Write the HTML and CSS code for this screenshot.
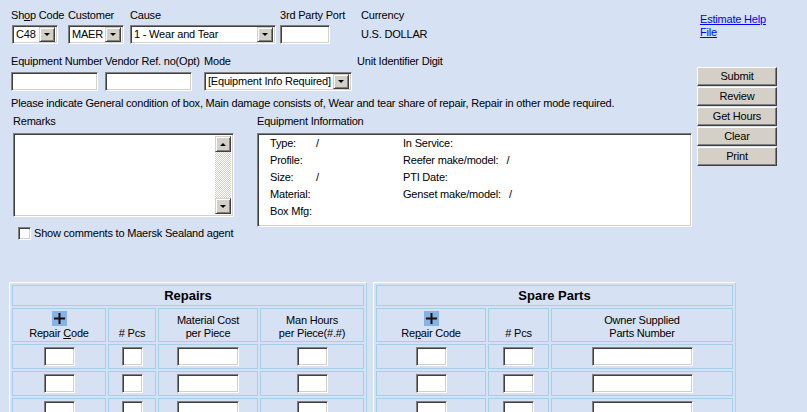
FILE: index.html
```html
<!DOCTYPE html>
<html>
<head>
<meta charset="utf-8">
<link rel="stylesheet" href="styles.css">
</head>
<body>
<div class="page">
  <div class="top">
    <div class="main">
      <div class="row1">
        <div class="lbl">Sh<u>o</u>p Code</div>
        <div class="lbl">Customer</div>
        <div class="lbl">Cause</div>
        <div class="lbl">3rd Party Port</div>
        <div class="lbl">Currency</div>
        <div class="sel w46 ml1"><span class="sel-text">C48</span><span class="dd"><i></i></span></div>
        <div class="sel w56"><span class="sel-text">MAER</span><span class="dd"><i></i></span></div>
        <div class="sel w146"><span class="sel-text">1 - Wear and Tear</span><span class="dd"><i></i></span></div>
        <div class="box w50"></div>
        <div class="value">U.S. DOLLAR</div>
      </div>
      <div class="row2">
        <div class="lbl">Equipment Number</div>
        <div class="lbl">Vendor Ref. no(Opt)</div>
        <div class="lbl">Mode</div>
        <div class="lbl">Unit Identifier Digit</div>
        <div class="box w87"></div>
        <div class="box w87"></div>
        <div class="sel w148"><span class="sel-text">[Equipment Info Required]</span><span class="dd"><i></i></span></div>
        <div></div>
      </div>
      <div class="note">Please indicate General condition of box, Main damage consists of, Wear and tear share of repair, Repair in other mode required.</div>
      <div class="info-row">
        <div class="remarks">
          <div class="lbl">Remarks</div>
          <div class="box textarea">
            <div class="ta-body"></div>
            <div class="scroll">
              <span class="sb-btn"><i class="up"></i></span>
              <span class="sb-track"></span>
              <span class="sb-btn"><i></i></span>
            </div>
          </div>
          <label class="check"><span class="cb"></span>Show comments to Maersk Sealand agent</label>
        </div>
        <div class="equip">
          <div class="lbl">Equipment Information</div>
          <div class="box eqbox">
            <div class="eq-grid">
              <div><span class="eq-l">Type:</span>/</div><div>In Service:</div>
              <div><span class="eq-l">Profile:</span></div><div>Reefer make/model:<span class="slash">/</span></div>
              <div><span class="eq-l">Size:</span>/</div><div>PTI Date:</div>
              <div><span class="eq-l">Material:</span></div><div>Genset make/model:<span class="slash">/</span></div>
              <div><span class="eq-l">Box Mfg:</span></div><div></div>
            </div>
          </div>
        </div>
      </div>
    </div>
    <div class="side">
      <a class="help" href="#">Estimate Help File</a>
      <div class="buttons">
        <button class="btn">Submit</button>
        <button class="btn">Review</button>
        <button class="btn">Get Hours</button>
        <button class="btn">Clear</button>
        <button class="btn">Print</button>
      </div>
    </div>
  </div>

  <div class="tables">
    <table class="grid repairs">
      <colgroup><col class="c94"><col class="c48"><col class="c100"><col class="c106"></colgroup>
      <tr><th colspan="4" class="title">Repairs</th></tr>
      <tr class="heads">
        <td><svg class="plus" width="15" height="15" viewBox="0 0 15 15"><rect width="15" height="15" fill="#86b3e3"/><path d="M7.5 2v11M2 7.5h11" stroke="#1a0d0d" stroke-width="2"/></svg><br>Repair <u>C</u>ode</td>
        <td># Pcs</td>
        <td>Material Cost<br>per Piece</td>
        <td>Man Hours<br>per Piece(#.#)</td>
      </tr>
      <tr class="data"><td><span class="box in31"></span></td><td><span class="box in21"></span></td><td><span class="box in62"></span></td><td><span class="box in31"></span></td></tr>
      <tr class="data"><td><span class="box in31"></span></td><td><span class="box in21"></span></td><td><span class="box in62"></span></td><td><span class="box in31"></span></td></tr>
      <tr class="data"><td><span class="box in31"></span></td><td><span class="box in21"></span></td><td><span class="box in62"></span></td><td><span class="box in31"></span></td></tr>
    </table>
    <table class="grid spare">
      <colgroup><col class="c110"><col class="c61"><col class="c184"></colgroup>
      <tr><th colspan="3" class="title">Spare Parts</th></tr>
      <tr class="heads">
        <td><svg class="plus" width="15" height="15" viewBox="0 0 15 15"><rect width="15" height="15" fill="#86b3e3"/><path d="M7.5 2v11M2 7.5h11" stroke="#1a0d0d" stroke-width="2"/></svg><br>Re<u>p</u>air Code</td>
        <td># Pcs</td>
        <td>Owner Supplied<br>Parts Number</td>
      </tr>
      <tr class="data"><td><span class="box in31"></span></td><td><span class="box in31"></span></td><td><span class="box in101"></span></td></tr>
      <tr class="data"><td><span class="box in31"></span></td><td><span class="box in31"></span></td><td><span class="box in101"></span></td></tr>
      <tr class="data"><td><span class="box in31"></span></td><td><span class="box in31"></span></td><td><span class="box in101"></span></td></tr>
    </table>
  </div>
</div>
</body>
</html>
```
FILE: styles.css
```css
html, body {
  margin: 0;
  padding: 0;
  overflow: hidden;
  height: 100%;
}
body {
  background: #d6e1f3;
  font-family: "Liberation Sans", Arial, sans-serif;
  font-size: 11px;
  line-height: 13px;
  letter-spacing: -0.2px;
  color: #000;
}
.page {
  padding: 9px 0 0 11px;
}
.top {
  display: flex;
}
.main {
  width: 681px;
  flex-shrink: 0;
}
.lbl {
  white-space: nowrap;
}
.row1 {
  display: grid;
  grid-template-columns: 57px 62px 150px 81px 1fr;
  grid-template-rows: 13px 19px;
  row-gap: 3px;
}
.row2 {
  margin-top: 11px;
  display: grid;
  grid-template-columns: 94px 99px 153px 1fr;
  grid-template-rows: 13px 19px;
  row-gap: 4px;
}
.value {
  align-self: center;
}
.box {
  box-sizing: border-box;
  display: block;
  height: 19px;
  background: #fff;
  border: 1px solid;
  border-color: #808080 #fff #fff #808080;
  box-shadow: inset 1px 1px 0 #404040, inset -1px -1px 0 #d4d0c8;
}
.sel {
  box-sizing: border-box;
  height: 19px;
  display: flex;
  align-items: center;
  background: #fff;
  border: 1px solid;
  border-color: #808080 #fff #fff #808080;
  box-shadow: inset 1px 1px 0 #404040, inset -1px -1px 0 #d4d0c8;
  padding: 2px 2px 2px 3px;
}
.sel-text {
  flex: 1;
  white-space: nowrap;
  overflow: hidden;
  line-height: 15px;
}
.dd, .sb-btn {
  flex-shrink: 0;
  box-sizing: border-box;
  width: 16px;
  height: 15px;
  background: #d4d0c8;
  border: 1px solid;
  border-color: #d4d0c8 #404040 #404040 #d4d0c8;
  box-shadow: inset 1px 1px 0 #fff, inset -1px -1px 0 #808080;
  display: flex;
  align-items: center;
  justify-content: center;
}
.dd i, .sb-btn i {
  width: 0;
  height: 0;
  border-left: 3px solid transparent;
  border-right: 3px solid transparent;
  border-top: 3px solid #000;
}
.sb-btn i.up {
  border-top: 0;
  border-bottom: 3px solid #000;
}
.ml1 { margin-left: 1px; }
.w46 { width: 46px; }
.w56 { width: 56px; }
.w146 { width: 146px; }
.w148 { width: 148px; }
.w50 { width: 50px; }
.w87 { width: 87px; }
.note {
  margin-top: 6px;
  white-space: nowrap;
}
.info-row {
  display: flex;
  margin-top: 5px;
}
.remarks {
  margin-left: 2px;
  width: 221px;
  flex-shrink: 0;
}
.textarea {
  margin-top: 5px;
  height: 84px;
  display: flex;
  padding: 2px;
}
.ta-body {
  flex: 1;
}
.scroll {
  width: 16px;
  display: flex;
  flex-direction: column;
}
.sb-btn {
  height: 16px;
}
.sb-track {
  flex: 1;
  background-color: #e8e6e2;
  background-image: repeating-conic-gradient(#ffffff 0 25%, #d4d0c8 0 50%);
  background-size: 2px 2px;
}
.check {
  display: flex;
  align-items: center;
  margin: 10px 0 0 5px;
  white-space: nowrap;
}
.cb {
  flex-shrink: 0;
  box-sizing: border-box;
  width: 13px;
  height: 13px;
  background: #fff;
  border: 1px solid;
  border-color: #808080 #fff #fff #808080;
  box-shadow: inset 1px 1px 0 #404040, inset -1px -1px 0 #d4d0c8;
  margin-right: 3px;
}
.equip {
  margin-left: 23px;
  width: 435px;
  flex-shrink: 0;
}
.eqbox {
  margin-top: 5px;
  height: 94px;
  padding: 1px 0 0 12px;
}
.eq-grid {
  display: grid;
  grid-template-columns: 133px 1fr;
  line-height: 17px;
}
.eq-l {
  display: inline-block;
  width: 46px;
}
.slash {
  margin-left: 8px;
}
.side {
  margin-left: 5px;
  width: 80px;
  flex-shrink: 0;
}
.help {
  display: block;
  margin: 4px 0 0 3px;
  width: 74px;
  color: #0000ff;
  text-decoration: underline;
}
.buttons {
  margin-top: 28px;
  display: flex;
  flex-direction: column;
  gap: 1px;
}
.btn {
  box-sizing: border-box;
  width: 80px;
  height: 19px;
  padding: 0;
  margin: 0;
  font: inherit;
  letter-spacing: inherit;
  color: #000;
  background: #d4d0c8;
  border: 1px solid;
  border-color: #fff #404040 #404040 #fff;
  box-shadow: inset -1px -1px 0 #808080;
}
.tables {
  display: flex;
  gap: 6px;
  margin: 42px 0 0 -2px;
  align-items: flex-start;
}
.grid {
  table-layout: fixed;
  border-collapse: separate;
  border-spacing: 2px;
  border: 1px solid;
  border-color: #fff #a9d3ec #a9d3ec #fff;
}
.grid td, .grid th {
  border: 1px solid #a3cfe9;
  padding: 0;
  text-align: center;
}
.title {
  height: 19px;
  font-size: 13px;
  font-weight: bold;
  letter-spacing: 0;
}
.heads td {
  height: 31px;
  vertical-align: bottom;
  padding-bottom: 1px;
}
.plus {
  display: inline-block;
  vertical-align: top;
  margin-bottom: 1px;
}
.data td {
  height: 23px;
  vertical-align: middle;
}
.data .box {
  display: inline-block;
  vertical-align: middle;
}
.c94 { width: 94px; }
.c48 { width: 48px; }
.c100 { width: 100px; }
.c106 { width: 104px; }
.c110 { width: 110px; }
.c61 { width: 61px; }
.c184 { width: 182px; }
.in21 { width: 21px; }
.in31 { width: 31px; }
.in62 { width: 62px; }
.in101 { width: 101px; }
```
